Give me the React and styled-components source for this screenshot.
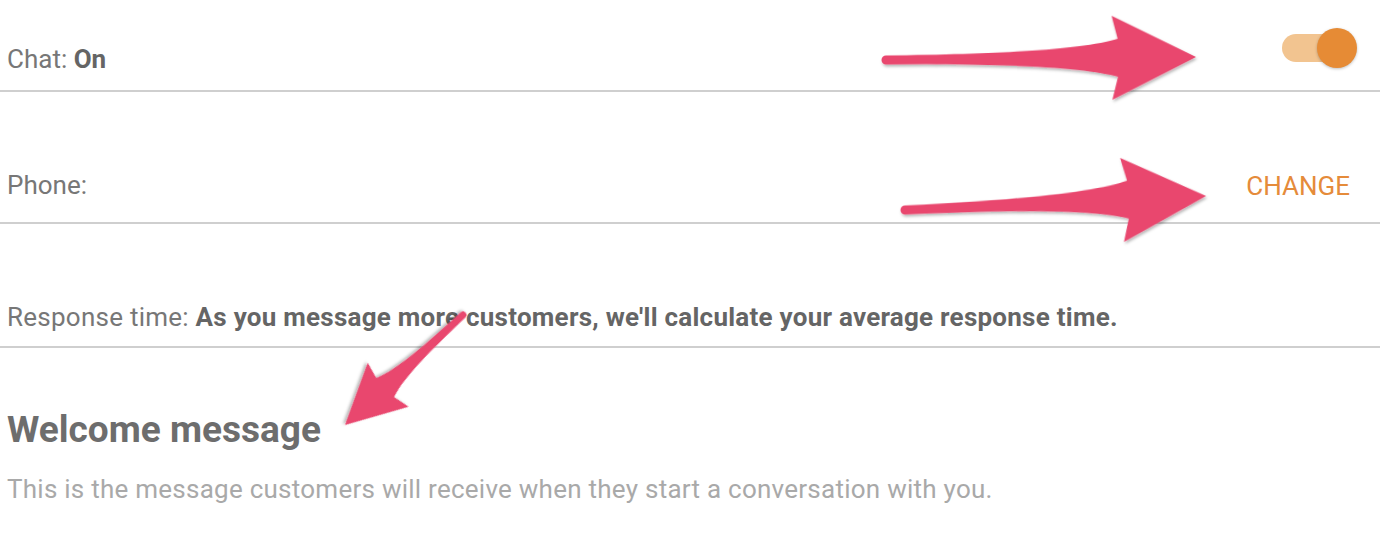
import React from "react";
import styled, { createGlobalStyle } from "styled-components";

const GlobalStyle = createGlobalStyle`
  html, body {
    margin: 0;
    background: #ffffff;
  }
  body {
    font-family: Roboto, "Liberation Sans", sans-serif;
    -webkit-font-smoothing: antialiased;
  }
`;

const Page = styled.div`
  position: relative;
  width: 1380px;
  height: 538px;
  overflow: hidden;
`;

const Row = styled.div`
  display: flex;
  justify-content: space-between;
  align-items: flex-start;
  height: ${(p) => p.height}px;
  padding: 0 0 0 7px;
  border-bottom: 2px solid #cfcfcf;
  box-sizing: content-box;
`;

const Label = styled.div`
  margin-top: ${(p) => p.top}px;
  font-size: 26px;
  line-height: 44px;
  color: #777777;
  letter-spacing: ${(p) => p.spacing || 0}px;
  white-space: nowrap;

  b {
    font-weight: 700;
    color: #656565;
  }
`;

const Toggle = styled.div`
  position: relative;
  margin: 34px 30px 0 0;
  width: 68px;
  height: 28px;
  border-radius: 14px;
  background: #f2c490;
`;

const Thumb = styled.span`
  position: absolute;
  top: -6px;
  right: -7px;
  width: 40px;
  height: 40px;
  border-radius: 50%;
  background: #e68b35;
  box-shadow: 0 1px 3px rgba(0, 0, 0, 0.25);
`;

const ChangeButton = styled.button`
  margin: ${(p) => p.top}px 30px 0 0;
  padding: 0;
  border: none;
  background: none;
  font-family: Roboto, "Liberation Sans", sans-serif;
  font-size: 26px;
  line-height: 44px;
  color: #e58b3a;
  text-transform: uppercase;
  cursor: pointer;
`;

const Intro = styled.div`
  padding: 60px 0 0 7px;
`;

const Heading = styled.h2`
  margin: 0;
  font-size: 37px;
  line-height: 44px;
  font-weight: 700;
  color: #6d6d6d;
`;

const Description = styled.p`
  margin: 19px 0 0;
  font-size: 26px;
  line-height: 36px;
  letter-spacing: 0.25px;
  color: #a9a9a9;
`;

const Overlay = styled.svg`
  position: absolute;
  top: 0;
  left: 0;
  pointer-events: none;
`;

function arrowPath(L, h, w, n, k, t) {
  const b = L - h;
  return [
    `M 0 ${-t}`,
    `C ${b * 0.6} ${-t} ${b * 0.9} ${-n * 0.55} ${b + k} ${-n}`,
    `L ${b} ${-w}`,
    `L ${L} 0`,
    `L ${b} ${w}`,
    `L ${b + k} ${n}`,
    `C ${b * 0.9} ${n * 0.55} ${b * 0.6} ${t} 0 ${t}`,
    `A ${t} ${t} 0 0 1 0 ${-t}`,
    "Z",
  ].join(" ");
}

const Arrow = ({ from, to, head = 84, half = 42, neck = 19, tail = 4 }) => {
  const dx = to[0] - from[0];
  const dy = to[1] - from[1];
  const len = Math.sqrt(dx * dx + dy * dy);
  const angle = (Math.atan2(dy, dx) * 180) / Math.PI;
  return (
    <path
      d={arrowPath(len, head, half, neck, head * 0.07, tail)}
      transform={`translate(${from[0]} ${from[1]}) rotate(${angle})`}
      fill="#e9466e"
      filter="url(#arrowShadow)"
    />
  );
};

export default function App() {
  return (
    <>
      <GlobalStyle />
      <Page>
        <Row height={90}>
          <Label top={37}>
            Chat: <b>On</b>
          </Label>
          <Toggle>
            <Thumb />
          </Toggle>
        </Row>
        <Row height={130}>
          <Label top={71}>Phone:</Label>
          <ChangeButton top={72}>Change</ChangeButton>
        </Row>
        <Row height={122}>
          <Label top={71} spacing={0.25}>
            Response time:{" "}
            <b>As you message more customers, we'll calculate your average response time.</b>
          </Label>
        </Row>
        <Intro>
          <Heading>Welcome message</Heading>
          <Description>
            This is the message customers will receive when they start a conversation with you.
          </Description>
        </Intro>

        <Overlay width="1380" height="538" viewBox="0 0 1380 538">
          <defs>
            <filter id="arrowShadow" x="-10%" y="-20%" width="130%" height="150%">
              <feDropShadow dx="1" dy="2" stdDeviation="1.5" floodColor="#000" floodOpacity="0.3" />
            </filter>
          </defs>
          <Arrow from={[886, 60]} to={[1196, 57]} tail={4.5} />
          <Arrow from={[905, 210]} to={[1206, 196]} tail={4.5} />
          <Arrow from={[463, 315]} to={[345, 425]} head={59} half={30} neck={13} tail={3.5} />
        </Overlay>
      </Page>
    </>
  );
}
